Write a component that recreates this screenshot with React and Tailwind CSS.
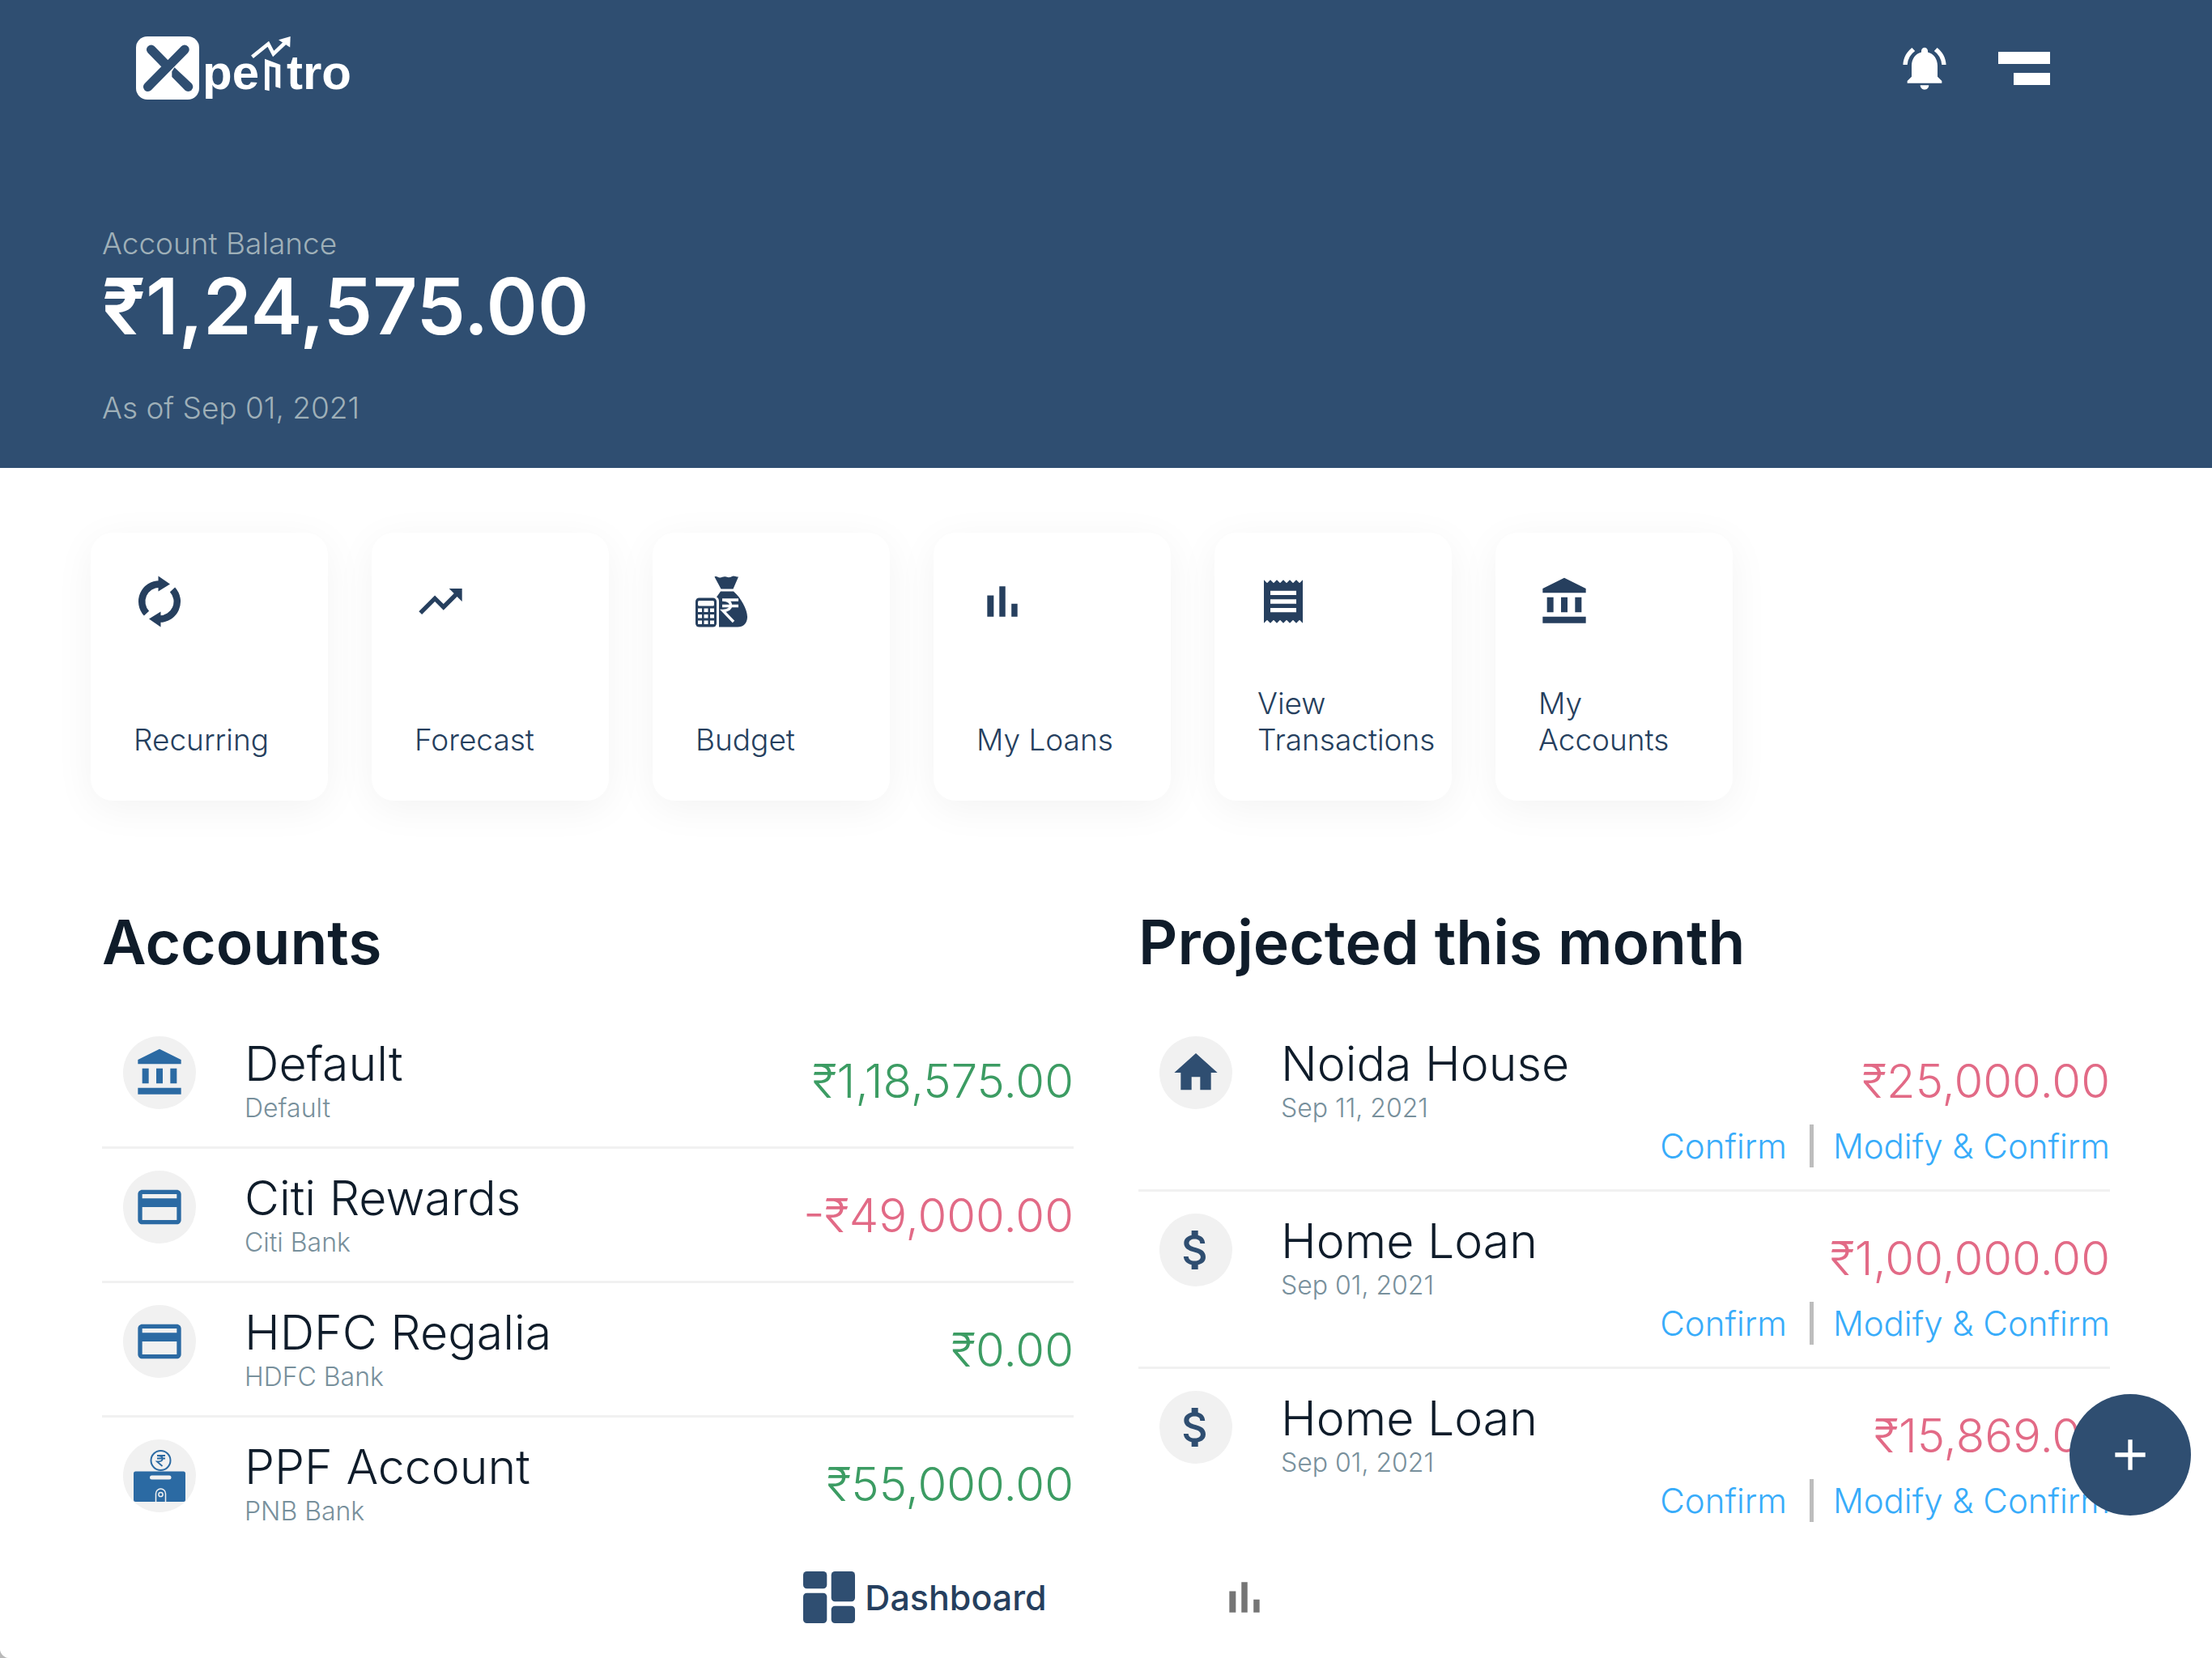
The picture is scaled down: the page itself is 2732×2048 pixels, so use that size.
import { MdNotificationsActive, MdTrendingUp, MdAccountBalance, MdReceipt, MdHome, MdAttachMoney, MdAdd, MdCreditCard } from "react-icons/md";

function Logo() {
  return (
    <svg viewBox="0 -1 266 80" className="h-20 w-[266px]" role="img" aria-label="Xpentro">
      <rect width="78" height="78" rx="14" fill="#fff" />
      <g stroke="#2f4e71" strokeWidth="11.5" strokeLinecap="round" fill="none">
        <path d="M60 16.3 14.7 62.3M18.7 16.3 37 35" />
      </g>
      <path d="M47.5 38.3 44.3 43.5V50L60.3 66.3a5.8 5.8 0 0 0 8.3-8.2z" fill="#2f4e71" />
      <path d="M143.5 25.2 163.3 9.2 169.7 21.5 185 7" stroke="#fff" strokeWidth="4.6" fill="none" />
      <path d="M176 4.3 190.7 0 190.2 13.6z" fill="#fff" />
      <path d="M159 27.7 178.3 35V64l-6-1.7V38.5L164.7 37v30.3L159 66z" fill="#fff" />
      <g fill="#fff" fontFamily="Liberation Sans, sans-serif" fontWeight="700" fontSize="60">
        <text x="82" y="65">pe</text>
        <text x="186" y="65">tro</text>
      </g>
    </svg>
  );
}

function BarsIcon({ className }) {
  return (
    <svg viewBox="0 0 24 24" fill="currentColor" className={className} aria-hidden="true">
      <path d="M5 9.2h3V19H5zM10.6 5h2.8v14h-2.8zm5.6 8H19v6h-2.8z" />
    </svg>
  );
}

function RecurringIcon({ className }) {
  return (
    <svg viewBox="0 0 64 64" fill="none" className={className} aria-hidden="true">
      <g>
        <path d="M16 46.700A21.600 21.600 0 0 1 32 10.400" stroke="currentColor" strokeWidth="8.500" />
        <path d="M30.500 0.500 45 10.500 30.500 19.500z" fill="currentColor" />
      </g>
      <g transform="rotate(180 32 32)">
        <path d="M16 46.700A21.600 21.600 0 0 1 32 10.400" stroke="currentColor" strokeWidth="8.500" />
        <path d="M30.500 0.500 45 10.500 30.500 19.500z" fill="currentColor" />
      </g>
    </svg>
  );
}

function BudgetIcon({ className }) {
  return (
    <svg viewBox="0 0 64 64" fill="currentColor" className={className} aria-hidden="true">
      <path d="M23.500 1.500c3-1.500 4.500 1.500 7 1s4.500-2 7.500-1 4.500 1 7-.500 4.500.500 8 .500L46.500 16.500h-15z" />
      <path d="M31 19.500h16C56 27 64 42 64 51c0 8-5 12.500-12 12.500H29V32c0-3-1-4.500-3-5.500z" />
      <path d="M33 30h20M33 37.500h20M34 30c13 0 13 13.500 0 13.500L47 57" stroke="#fff" strokeWidth="3.400" fill="none" />
      <rect x="0" y="27.500" width="26" height="36" rx="4.500" />
      <rect x="3" y="31" width="20" height="6.500" rx="1.500" fill="#fff" />
      <path d="M3 40.500h5v4.500H3zM10.500 40.500h5v4.500h-5zM18 40.500h5v4.500h-5zM3 48h5v4.500H3zM10.500 48h5v4.500h-5zM18 48h5v4.500h-5zM3 55.500h5V60H3zM10.500 55.500h5V60h-5zM18 55.500h5V60h-5z" fill="#fff" />
    </svg>
  );
}

function DepositIcon({ className }) {
  return (
    <svg viewBox="0 0 64 64" fill="none" className={className} aria-hidden="true">
      <circle cx="33.500" cy="13" r="12" stroke="currentColor" strokeWidth="2" />
      <path d="M29 7h10M29 10.500h10M29 7c9 0 9 7.500 0 7.500L35.500 20" stroke="currentColor" strokeWidth="1.800" />
      <rect y="26.500" width="64" height="37.500" rx="2.500" fill="currentColor" />
      <rect x="20" y="31.500" width="26.500" height="5" rx="2.500" fill="#f1f1f1" />
      <path d="M27.500 64V54a6 6 0 0 1 12 0V64" stroke="#f1f1f1" strokeWidth="1.500" />
      <circle cx="33.500" cy="55" r="2.600" stroke="#f1f1f1" strokeWidth="1.500" />
    </svg>
  );
}

function DashboardIcon({ className }) {
  return (
    <svg viewBox="0 0 64 64" fill="currentColor" className={className} aria-hidden="true">
      <rect width="29.300" height="21.300" rx="4.500" />
      <rect y="26.700" width="29.300" height="37.300" rx="4.500" />
      <rect x="34.700" width="29.300" height="37.300" rx="4.500" />
      <rect x="34.700" y="42.700" width="29.300" height="21.300" rx="4.500" />
    </svg>
  );
}

const shortcuts = [
  { label: "Recurring", Icon: RecurringIcon },
  { label: "Forecast", Icon: MdTrendingUp },
  { label: "Budget", Icon: BudgetIcon },
  { label: "My Loans", Icon: BarsIcon },
  { label: "View Transactions", Icon: MdReceipt },
  { label: "My Accounts", Icon: MdAccountBalance },
];

const accounts = [
  { name: "Default", bank: "Default", amount: "₹1,18,575.00", Icon: MdAccountBalance },
  { name: "Citi Rewards", bank: "Citi Bank", amount: "-₹49,000.00", Icon: MdCreditCard, negative: true },
  { name: "HDFC Regalia", bank: "HDFC Bank", amount: "₹0.00", Icon: MdCreditCard },
  { name: "PPF Account", bank: "PNB Bank", amount: "₹55,000.00", Icon: DepositIcon },
];

const projected = [
  { name: "Noida House", date: "Sep 11, 2021", amount: "₹25,000.00", Icon: MdHome },
  { name: "Home Loan", date: "Sep 01, 2021", amount: "₹1,00,000.00", Icon: MdAttachMoney },
  { name: "Home Loan", date: "Sep 01, 2021", amount: "₹15,869.00", Icon: MdAttachMoney },
];

function Entry({ name, detail, Icon, tone, children }) {
  return (
    <li className="flex border-b-3 border-[#f1f1f1] py-[27px] last:border-transparent">
      <span className={"ml-[26px] flex size-[90px] shrink-0 items-center justify-center rounded-full bg-[#f1f1f1] " + tone}>
        <Icon className="size-16" />
      </span>
      <div className="ml-[60px] flex-1">
        <p className="text-[59px] leading-[68px] font-light text-[#0f1c2a]">{name}</p>
        <p className="text-[32px] leading-[41px] font-light text-[#78909c]">{detail}</p>
      </div>
      <div className="flex flex-col items-end pt-[19px]">{children}</div>
    </li>
  );
}

export default function App() {
  return (
    <div className="bg-[#b9b9b9]">
      <div className="min-h-screen overflow-hidden rounded-bl-xl bg-white font-['Inter',sans-serif]">
        <header className="bg-[#2f4e71] pb-[52px]">
          <div className="flex h-[168px] items-center justify-between pr-[200px] pl-[168px]">
            <a href="#home"><Logo /></a>
            <div className="flex items-center gap-[59px] text-white">
              <button type="button" aria-label="Notifications"><MdNotificationsActive className="size-16" /></button>
              <button type="button" aria-label="Menu" className="flex w-16 flex-col items-end gap-[11px]">
                <span className="h-[15px] w-full bg-white" />
                <span className="h-[15px] w-[45px] bg-white" />
              </button>
            </div>
          </div>
          <div className="px-[126px] pt-[110px]">
            <p className="text-[37px] leading-[45px] font-light text-[#9fb0b8]">Account Balance</p>
            <p className="text-[96px] leading-[110px] font-semibold text-white">₹1,24,575.00</p>
            <p className="mt-12 text-[37px] leading-[45px] font-light text-[#9fb0b8]">As of Sep 01, 2021</p>
          </div>
        </header>

        <main>
          <nav className="flex gap-[54px] px-28 pt-20" aria-label="Shortcuts">
            {shortcuts.map(({ label, Icon }) => (
              <a key={label} href="#open" className="flex h-[331px] w-[293px] flex-col justify-between rounded-[27px] bg-white p-[53px] text-[#263f5e] shadow-[0_10px_50px_rgba(0,0,0,0.05)]">
                <Icon className="size-16" />
                <span className="text-[37px] leading-[45px] font-light">{label}</span>
              </a>
            ))}
          </nav>

          <div className="grid grid-cols-2 gap-20 px-[126px] pt-[130px]">
            <section>
              <h2 className="text-[75px] leading-[90px] font-semibold text-[#0f1c2a]">Accounts</h2>
              <ul className="mt-11">
                {accounts.map((a) => (
                  <Entry key={a.name} name={a.name} detail={a.bank} Icon={a.Icon} tone="text-[#2b6aa3]">
                    <p className={"text-[58px] leading-[72px] font-light " + (a.negative ? "text-[#e26a86]" : "text-[#3c9c63]")}>{a.amount}</p>
                  </Entry>
                ))}
              </ul>
            </section>
            <section>
              <h2 className="text-[75px] leading-[90px] font-semibold text-[#0f1c2a]">Projected this month</h2>
              <ul className="mt-11">
                {projected.map((p, i) => (
                  <Entry key={i} name={p.name} detail={p.date} Icon={p.Icon} tone="text-[#2f4e71]">
                    <p className="text-[58px] leading-[72px] font-light text-[#e26a86]">{p.amount}</p>
                    <div className="mt-[18px] flex items-center text-[42px] leading-[53px] font-light text-[#38acfa]">
                      <button type="button">Confirm</button>
                      <span className="mr-6 ml-7 h-[53px] w-[5px] bg-[#bdbdbd]" />
                      <button type="button">Modify &amp; Confirm</button>
                    </div>
                  </Entry>
                ))}
              </ul>
            </section>
          </div>
        </main>

        <button type="button" aria-label="Add" className="fixed right-[26px] bottom-44 flex size-[150px] items-center justify-center rounded-full bg-[#2f4e71] text-white">
          <MdAdd className="size-16" />
        </button>

        <nav className="fixed inset-x-0 bottom-0 flex h-[150px] items-center justify-center gap-[212px] rounded-bl-xl bg-white pr-[171px]" aria-label="Main">
          <a href="#dashboard" className="flex items-center gap-3 text-[43px] leading-[53px] font-medium text-[#263f5e]">
            <DashboardIcon className="size-16 text-[#2f4e71]" />
            Dashboard
          </a>
          <a href="#reports" aria-label="Reports"><BarsIcon className="size-16 text-[#757575]" /></a>
        </nav>
      </div>
    </div>
  );
}
